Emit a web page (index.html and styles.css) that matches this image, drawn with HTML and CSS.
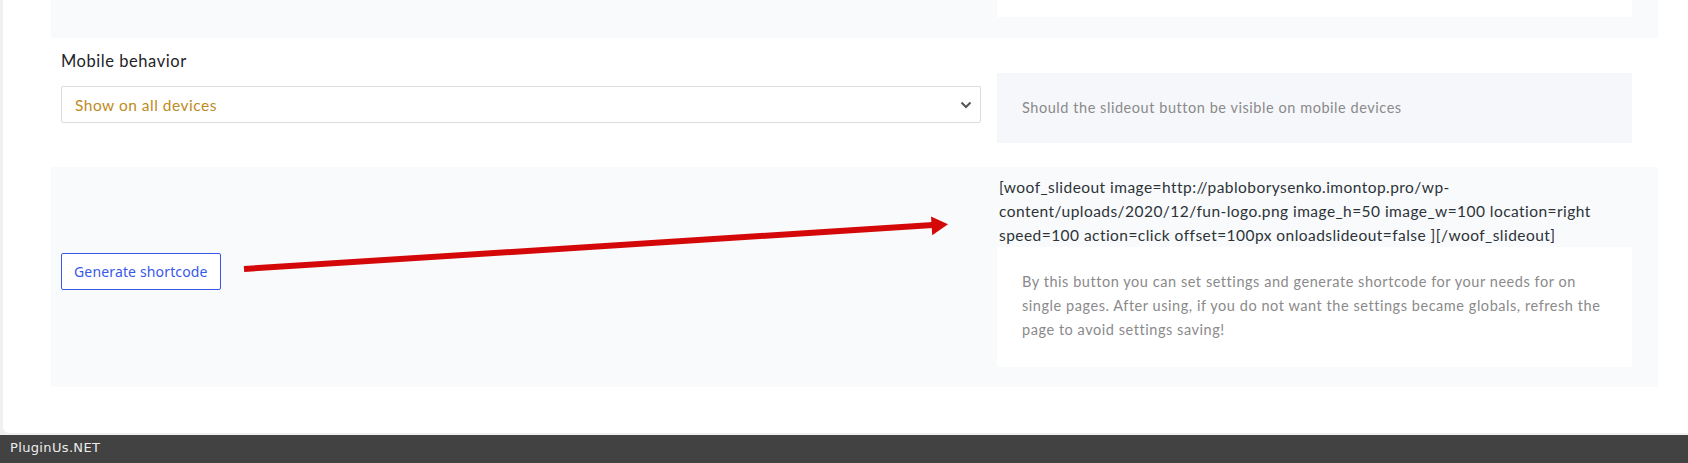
FILE: index.html
```html
<!DOCTYPE html>
<html lang="en">
<head>
<meta charset="utf-8">
<title>Slideout settings</title>
<link rel="stylesheet" href="styles.css">
</head>
<body>
<div class="wrap">
  <div class="panel panel-top">
    <div class="row">
      <div class="col-left"></div>
      <div class="col-right"><div class="white-stub"></div></div>
    </div>
  </div>

  <div class="row row-mobile">
    <div class="col-left field">
      <div class="label">Mobile behavior</div>
      <div class="select">
        <span class="select-value">Show on all devices</span>
        <svg class="chevron" width="12" height="8" viewBox="0 0 12 8"><path d="M1.5 1.5 L6 6 L10.5 1.5" fill="none" stroke="#555" stroke-width="2"/></svg>
      </div>
    </div>
    <div class="col-right">
      <div class="desc desc-tinted">Should the slideout button be visible on mobile devices</div>
    </div>
  </div>

  <div class="panel panel-bottom">
    <div class="row row-shortcode">
      <div class="col-left">
        <button class="btn">Generate shortcode</button>
      </div>
      <div class="col-right">
        <div class="shortcode">[woof_slideout image=http://pabloborysenko.imontop.pro/wp-content/uploads/2020/12/fun-logo.png image_h=50 image_w=100 location=right speed=100 action=click offset=100px onloadslideout=false ][/woof_slideout]</div>
        <div class="desc desc-white">By this button you can set settings and generate shortcode for your needs for on single pages. After using, if you do not want the settings became globals, refresh the page to avoid settings saving!</div>
      </div>
    </div>
  </div>
</div>
<div class="footer">PluginUs.NET</div>

<svg class="annotation" width="1688" height="463" viewBox="0 0 1688 463">
  <line x1="244" y1="269" x2="933" y2="225" stroke="#d40808" stroke-width="6"/>
  <polygon points="948,224.2 931,216.6 932.2,235.2" fill="#d40808"/>
</svg>
</body>
</html>
```

FILE: styles.css
```css
html, body {
  margin: 0;
  padding: 0;
}
body {
  width: 1688px;
  height: 463px;
  background: #f0f0f1;
  position: relative;
  overflow: hidden;
  font-family: Lato, "Noto Sans", sans-serif;
}
.wrap {
  margin-left: 3px;
  height: 433px;
  background: #fff;
  border-bottom-left-radius: 6px;
  padding-left: 48px;
  padding-right: 30px;
  box-sizing: border-box;
}
.panel {
  background: #f9fafc;
}
.row {
  display: grid;
  grid-template-columns: 920px 635px;
  column-gap: 16px;
  padding-left: 10px;
  padding-right: 26px;
}
.panel-top {
  height: 38px;
}
.white-stub {
  height: 17px;
  background: #fff;
}
.row-mobile {
  align-items: start;
  padding-bottom: 24px;
}
.field {
  padding-top: 12px;
}
.label {
  font-size: 16.5px;
  letter-spacing: 0.55px;
  line-height: 22px;
  color: #1d2327;
  margin-bottom: 14px;
}
.select {
  height: 37px;
  box-sizing: border-box;
  border: 1px solid #dcdcde;
  border-radius: 2px;
  background: #fff;
  display: flex;
  align-items: center;
  justify-content: space-between;
  padding: 0 8px 0 13px;
}
.select-value {
  font-size: 15.5px;
  letter-spacing: 0.5px;
  color: #c08a22;
}
.chevron {
  display: block;
}
.row-mobile .col-right {
  padding-top: 35px;
}
.desc {
  font-size: 14.5px;
  letter-spacing: 0.55px;
  line-height: 24px;
  color: #8a8a8a;
  padding: 23px 25px;
}
.desc-tinted {
  background: #f6f7fa;
}
.desc-white {
  background: #fff;
  padding-bottom: 25px;
}
.panel-bottom {
  padding-top: 8px;
  padding-bottom: 20px;
}
.row-shortcode {
  align-items: center;
}
.shortcode {
  font-size: 15.5px;
  letter-spacing: 0.45px;
  line-height: 24px;
  color: #2c3338;
  padding-left: 2px;
}
.btn {
  height: 37px;
  box-sizing: border-box;
  padding: 0 12px;
  border: 1px solid #3858e9;
  border-radius: 2px;
  background: #fff;
  color: #3858e9;
  font-family: "Noto Sans", sans-serif;
  font-size: 14px;
  letter-spacing: 0.15px;
  cursor: pointer;
}
.footer {
  margin-top: 2px;
  height: 28px;
  background: #424242;
  color: #ececec;
  font-family: "DejaVu Sans", sans-serif;
  font-size: 13px;
  letter-spacing: 0.35px;
  line-height: 26px;
  padding-left: 10px;
}
.annotation {
  position: absolute;
  left: 0;
  top: 0;
  pointer-events: none;
}
```
